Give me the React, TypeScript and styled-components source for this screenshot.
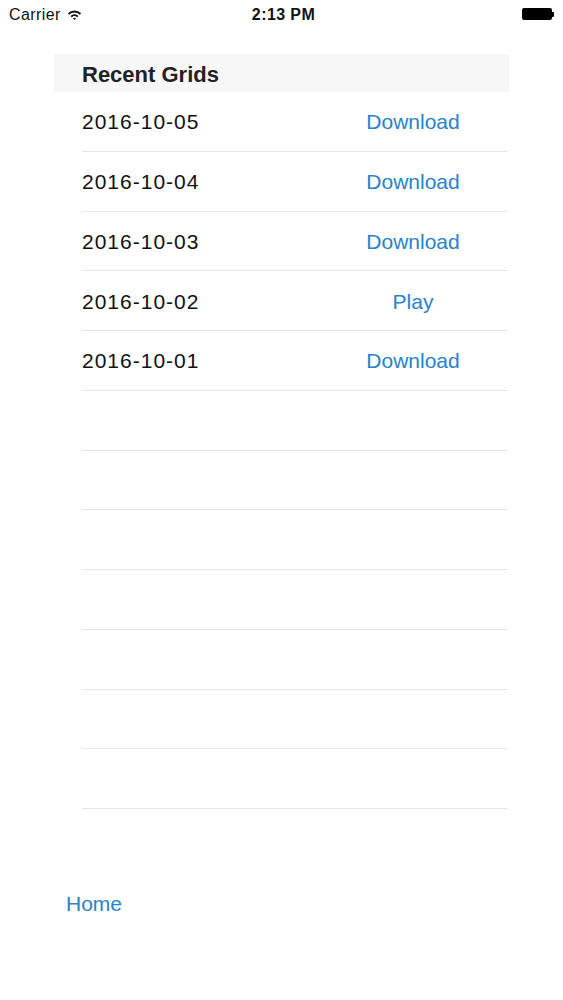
import React from "react";
import styled, { createGlobalStyle } from "styled-components";

const Global = createGlobalStyle`
  html, body { margin: 0; padding: 0; background: #ffffff; }
  body { font-family: "Liberation Sans", Arial, sans-serif; -webkit-font-smoothing: antialiased; }
`;

const Page = styled.div`
  width: 563px;
  height: 1000px;
  display: flex;
  flex-direction: column;
  background: #fff;
`;

const StatusBar = styled.div`
  height: 28px;
  box-sizing: border-box;
  padding: 2px 9px 0;
  display: grid;
  grid-template-columns: 1fr auto 1fr;
  align-items: center;
  font-size: 16px;
  color: #111;
`;

const Left = styled.div`
  display: flex;
  align-items: center;
  gap: 6px;
`;

const Carrier = styled.span`
  letter-spacing: 0.4px;
`;

const Time = styled.div`
  font-weight: bold;
  font-size: 16px;
  letter-spacing: 0.4px;
  margin-left: 4px;
`;

const Right = styled.div`
  display: flex;
  justify-content: flex-end;
  align-items: center;
  margin-top: -2px;
`;

const Battery = styled.div`
  display: flex;
  align-items: center;
`;

const BatteryBody = styled.div`
  width: 30px;
  height: 12px;
  border-radius: 2px;
  background: #000;
`;

const BatteryNub = styled.div`
  width: 2px;
  height: 5px;
  background: #000;
  border-radius: 0 1px 1px 0;
`;

const Table = styled.div`
  margin: 26px 0 0 54px;
  width: 455px;
  display: flex;
  flex-direction: column;
`;

const Header = styled.div`
  height: 38px;
  background: #f7f7f8;
  display: flex;
  align-items: center;
  padding-left: 28px;
  font-size: 22px;
  font-weight: bold;
  color: #222;
  box-sizing: border-box;
  padding-top: 3px;
`;

const Rows = styled.div`
  margin-left: 28px;
  margin-right: 1px;
  display: flex;
  flex-direction: column;
`;

const Row = styled.div`
  height: 59.75px;
  box-sizing: border-box;
  padding-top: 2px;
  border-bottom: 1px solid #e6e6e8;
  display: flex;
  align-items: center;
  justify-content: space-between;
`;

const DateText = styled.div`
  font-size: 21px;
  letter-spacing: 1px;
  color: #111;
`;

const Action = styled.div`
  width: 150px;
  margin-right: 20px;
  text-align: center;
  font-size: 21px;
  color: #2a82cc;
`;

const HomeLink = styled.div`
  margin: 83px 0 0 66px;
  font-size: 21px;
  color: #2a82cc;
`;

const WifiIcon = () => (
  <svg width="15" height="12" viewBox="0 0 17 13">
    <path d="M1 4.6 A10.5 10.5 0 0 1 16 4.6 L14.4 6.2 A8.3 8.3 0 0 0 2.6 6.2 Z" fill="#111" />
    <path d="M3.9 7.5 A6.4 6.4 0 0 1 13.1 7.5 L11.5 9.1 A4.2 4.2 0 0 0 5.5 9.1 Z" fill="#111" />
    <path d="M6.8 10.4 A2.4 2.4 0 0 1 10.2 10.4 L8.5 12.2 Z" fill="#111" />
  </svg>
);

const items: { date: string; action: string }[] = [
  { date: "2016-10-05", action: "Download" },
  { date: "2016-10-04", action: "Download" },
  { date: "2016-10-03", action: "Download" },
  { date: "2016-10-02", action: "Play" },
  { date: "2016-10-01", action: "Download" },
];

export default function App() {
  const empties = Array.from({ length: 7 });
  return (
    <>
      <Global />
      <Page>
        <StatusBar>
          <Left>
            <Carrier>Carrier</Carrier>
            <WifiIcon />
          </Left>
          <Time>2:13 PM</Time>
          <Right>
            <Battery>
              <BatteryBody />
              <BatteryNub />
            </Battery>
          </Right>
        </StatusBar>
        <Table>
          <Header>Recent Grids</Header>
          <Rows>
            {items.map((it) => (
              <Row key={it.date}>
                <DateText>{it.date}</DateText>
                <Action>{it.action}</Action>
              </Row>
            ))}
            {empties.map((_, i) => (
              <Row key={"e" + i} />
            ))}
          </Rows>
        </Table>
        <HomeLink>Home</HomeLink>
      </Page>
    </>
  );
}
